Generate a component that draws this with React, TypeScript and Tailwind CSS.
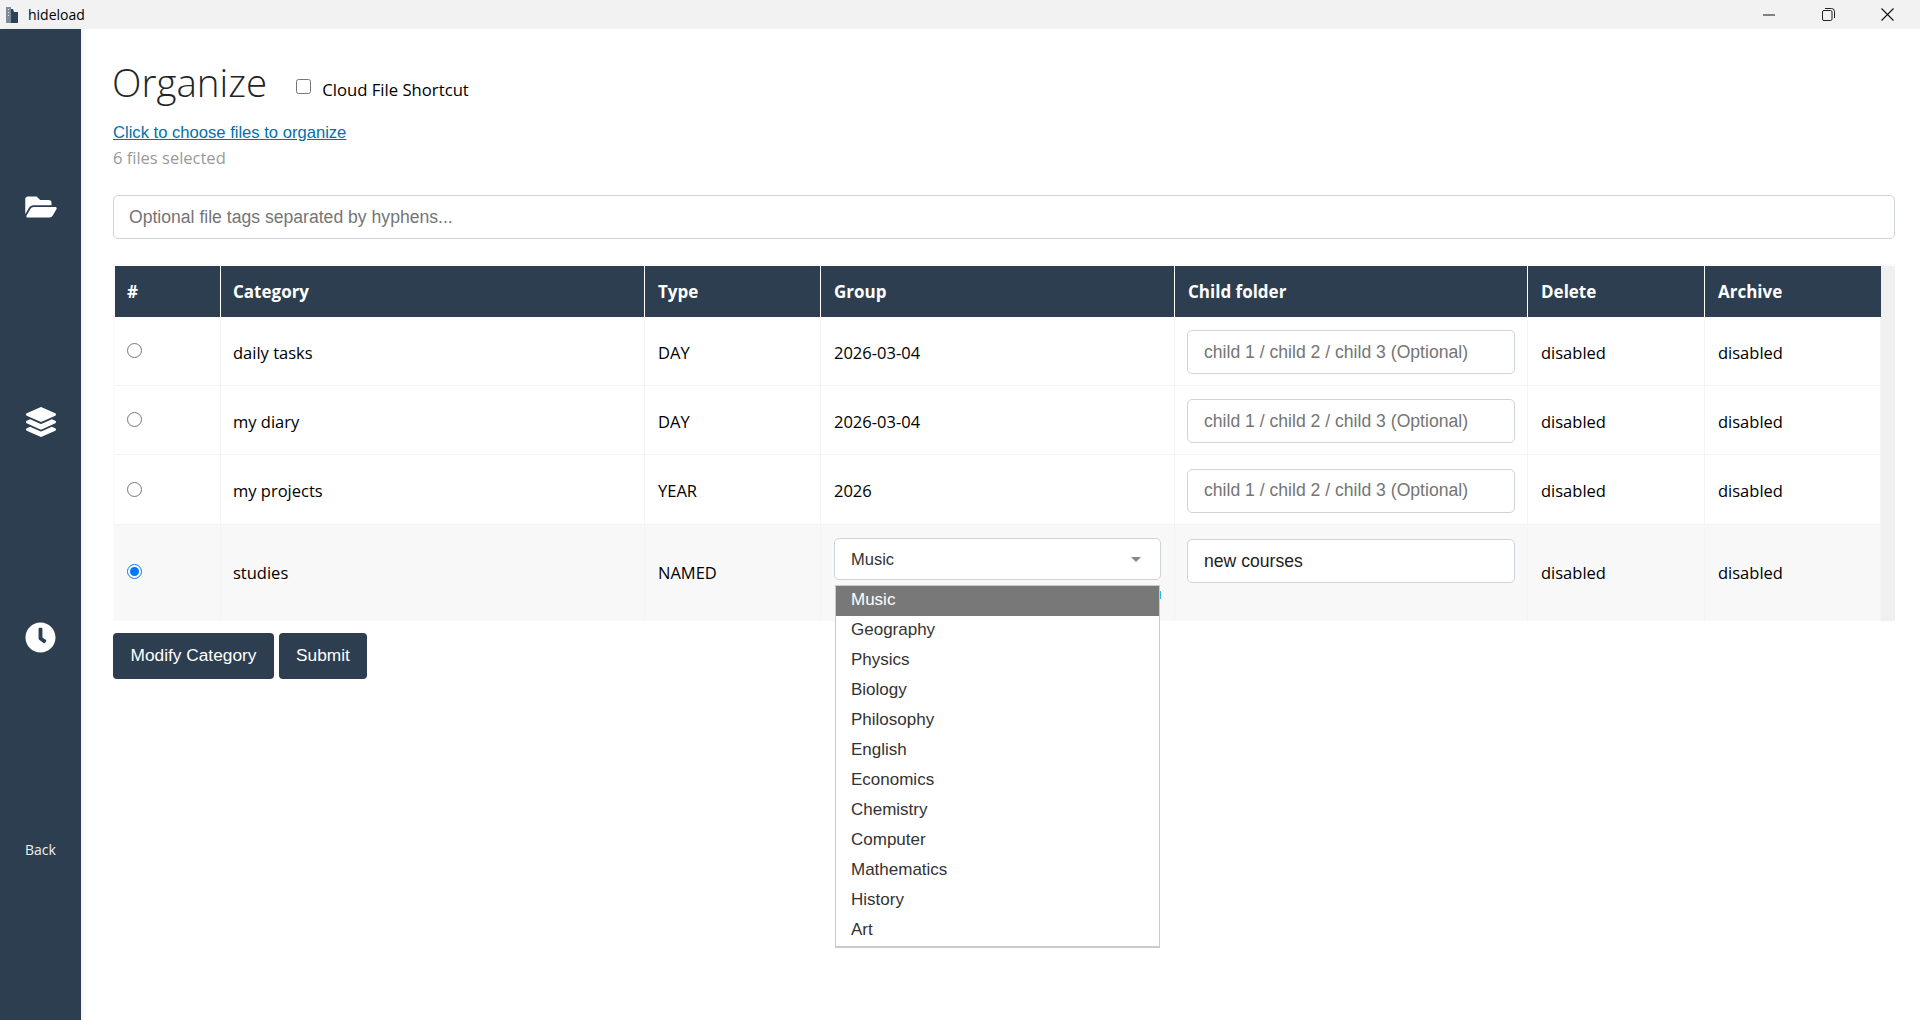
import { FaClock, FaFolderOpen, FaLayerGroup } from "react-icons/fa";

const ui = "font-['Open_Sans',sans-serif]";
const arial = "font-['Liberation_Sans',Arial,sans-serif]";

const GROUPS = [
  "Music",
  "Geography",
  "Physics",
  "Biology",
  "Philosophy",
  "English",
  "Economics",
  "Chemistry",
  "Computer",
  "Mathematics",
  "History",
  "Art",
];

const ROWS = [
  { category: "daily tasks", type: "DAY", group: "2026-03-04", height: "h-[69px]" },
  { category: "my diary", type: "DAY", group: "2026-03-04", height: "h-[69px]" },
  { category: "my projects", type: "YEAR", group: "2026", height: "h-[70px]" },
];

const HEADERS = ["#", "Category", "Type", "Group", "Child folder", "Delete", "Archive"];
const WIDTHS = ["w-[106px]", "w-[424px]", "w-[176px]", "w-[354px]", "w-[353px]", "w-[177px]", "w-[176px]"];

const cell = "border-r border-[#f4f4f4] px-[13px] align-middle";
const first = "border-r border-[#f4f4f4] pl-[12px] pr-[13px] align-middle";

const TitleBar = () => (
  <div className="flex h-[29px] shrink-0 items-center bg-[#f2f2f2]">
    <svg width="14" height="18" viewBox="0 0 14 18" className="ml-[5px]">
      <path d="M1 1h5v16H1z" fill="#7d8a99" />
      <path d="M6 3h2l1 3h4v11H6z" fill="#2c4257" />
      <path d="M3 3h1v1H3zM3 6h1v1H3zM3 9h1v1H3z" fill="#e8e8e8" />
    </svg>
    <span className={`ml-[9px] text-[14px] text-black ${ui}`}>hideload</span>
    <div className="ml-auto flex items-center">
      <svg width="12" height="2" viewBox="0 0 12 2" className="mr-[47px]">
        <path d="M0 1h12" stroke="#111" strokeWidth="1" />
      </svg>
      <svg width="13" height="13" viewBox="0 0 13 13" className="mr-[46px]" fill="none" stroke="#222">
        <rect x="0.5" y="2.5" width="9.5" height="10" rx="1.5" />
        <path d="M3 0.5h6.5a3 3 0 0 1 3 3V10" />
      </svg>
      <svg width="13" height="13" viewBox="0 0 13 13" className="mr-[26px]" stroke="#111" strokeWidth="1.1">
        <path d="M0.5 0.5l12 12M12.5 0.5l-12 12" />
      </svg>
    </div>
  </div>
);

const Sidebar = () => (
  <div className="flex w-[81px] shrink-0 flex-col bg-[#2c3e50] pt-[71px] text-white shadow-[2px_0_4px_rgba(0,0,0,0.05)]">
    <div className="flex h-[214px] items-center justify-center">
      <FaFolderOpen className="h-[28px] w-[32px]" />
    </div>
    <div className="flex h-[216px] items-center justify-center">
      <FaLayerGroup className="h-[30px] w-[30px]" />
    </div>
    <div className="flex h-[214px] items-center justify-center">
      <FaClock className="h-[31px] w-[31px]" />
    </div>
    <div className={`flex h-[210px] items-center justify-center text-[14px] text-[#f0f0f0] ${ui}`}>Back</div>
  </div>
);

const ChildInput = ({ value }: { value?: string }) => (
  <input
    readOnly
    value={value ?? ""}
    placeholder="child 1 / child 2 / child 3 (Optional)"
    className={`h-[44px] w-[328px] rounded-[5px] border border-[#ced4da] bg-white pl-[16px] text-[17.6px] text-[#222] outline-none placeholder:text-[#757575] ${arial}`}
  />
);

const GroupDropdown = () => (
  <div className="relative w-[327px]">
    <div className={`flex h-[42px] items-center justify-between rounded-[5px] border border-[#ced4da] bg-white pl-[16px] pr-[19px] text-[16.5px] text-[#333] ${arial}`}>
      Music
      <span className="h-0 w-0 border-x-[5px] border-t-[5px] border-x-transparent border-t-[#888]" />
    </div>
    <div className={`absolute left-px top-[47px] z-10 w-[325px] border border-b-2 border-[#c8cacc] bg-white text-[17px] text-[#333] ${arial}`}>
      {GROUPS.map((name, i) => (
        <div
          key={name}
          className={`flex h-[30px] items-center pb-[2px] pl-[15px] ${i === 0 ? "bg-[#787878] text-white" : ""}`}
        >
          {name}
        </div>
      ))}
    </div>
    <span className="absolute left-[326px] top-[53px] h-[8px] w-px bg-[#29b6f6]" />
  </div>
);

const App = () => (
  <div className="flex h-[1020px] w-[1920px] flex-col overflow-hidden bg-white">
    <TitleBar />
    <div className="flex min-h-0 flex-1">
      <Sidebar />
      <div className="flex-1 pl-[32px] pr-[25px] pt-[25px]">
        <div className="flex h-[60px] items-center">
          <h1 className={`-ml-[1px] -mt-[4px] text-[38.5px] font-light leading-[60px] text-[#212529] ${ui}`}>Organize</h1>
          <input type="checkbox" readOnly className="ml-[29px] mt-[5px] h-[15px] w-[15px]" />
          <span className={`ml-[11px] mt-[11px] text-[16.7px] text-black ${ui}`}>Cloud File Shortcut</span>
        </div>
        <a href="#" className={`mt-[7px] block w-fit text-[16.6px] leading-[24px] text-[#0071a9] underline ${arial}`}>
          Click to choose files to organize
        </a>
        <p className={`mt-[1px] text-[16.5px] leading-[24px] text-[#999] ${ui}`}>6 files selected</p>
        <input
          readOnly
          placeholder="Optional file tags separated by hyphens..."
          className={`mt-[25px] block h-[44px] w-full rounded-[5px] border border-[#ced4da] bg-white pl-[15px] text-[17.6px] outline-none placeholder:text-[#757575] ${arial}`}
        />
        <div className="mt-[25px] flex bg-[#fafafa] pl-[2px] pt-[2px]">
          <table className={`w-[1766px] table-fixed border-separate border-spacing-0 text-[16.5px] text-black ${ui}`}>
            <colgroup>
              {WIDTHS.map((w, i) => (
                <col key={i} className={w} />
              ))}
            </colgroup>
            <thead>
              <tr className="h-[51px] bg-[#2c3e50] text-left text-[17px] text-white">
                {HEADERS.map((h, i) => (
                  <th key={h} className={`${i < 2 ? "pl-[12px]" : "pl-[13px]"} font-bold ${i < HEADERS.length - 1 ? "border-r border-white" : ""}`}>
                    {h}
                  </th>
                ))}
              </tr>
            </thead>
            <tbody>
              {ROWS.map((row) => (
                <tr key={row.category} className={`${row.height} bg-white`}>
                  <td className={`${first} border-b`}>
                    <input type="radio" readOnly className="mb-[1px] block h-[15px] w-[15px]" />
                  </td>
                  <td className={`${first} border-b pt-[4px]`}>{row.category}</td>
                  <td className={`${cell} border-b pt-[4px]`}>{row.type}</td>
                  <td className={`${cell} border-b pt-[4px]`}>{row.group}</td>
                  <td className={`${first} border-b pt-[2px]`}>
                    <ChildInput />
                  </td>
                  <td className={`${cell} border-b pt-[4px]`}>disabled</td>
                  <td className={`${cell} border-b pt-[4px]`}>disabled</td>
                </tr>
              ))}
              <tr className="h-[96px] bg-[#f8f8f8]">
                <td className={first}>
                  <input type="radio" readOnly checked className="mb-[4px] block h-[15px] w-[15px]" />
                </td>
                <td className={first}>studies</td>
                <td className={cell}>NAMED</td>
                <td className={`${cell} !align-top pt-[13px]`}>
                  <GroupDropdown />
                </td>
                <td className={`${first} !align-top pt-[14px]`}>
                  <ChildInput value="new courses" />
                </td>
                <td className={cell}>disabled</td>
                <td className={cell}>disabled</td>
              </tr>
            </tbody>
          </table>
          <div className="w-[14px] bg-[#f0f0f0]" />
        </div>
        <div className="mt-[12px] flex gap-[5px]">
          <button className={`h-[46px] w-[161px] rounded-[4px] bg-[#2c3e50] text-[17.3px] text-white ${arial}`}>Modify Category</button>
          <button className={`h-[46px] w-[88px] rounded-[4px] bg-[#2c3e50] text-[17.3px] text-white ${arial}`}>Submit</button>
        </div>
      </div>
    </div>
  </div>
);

export default App;
